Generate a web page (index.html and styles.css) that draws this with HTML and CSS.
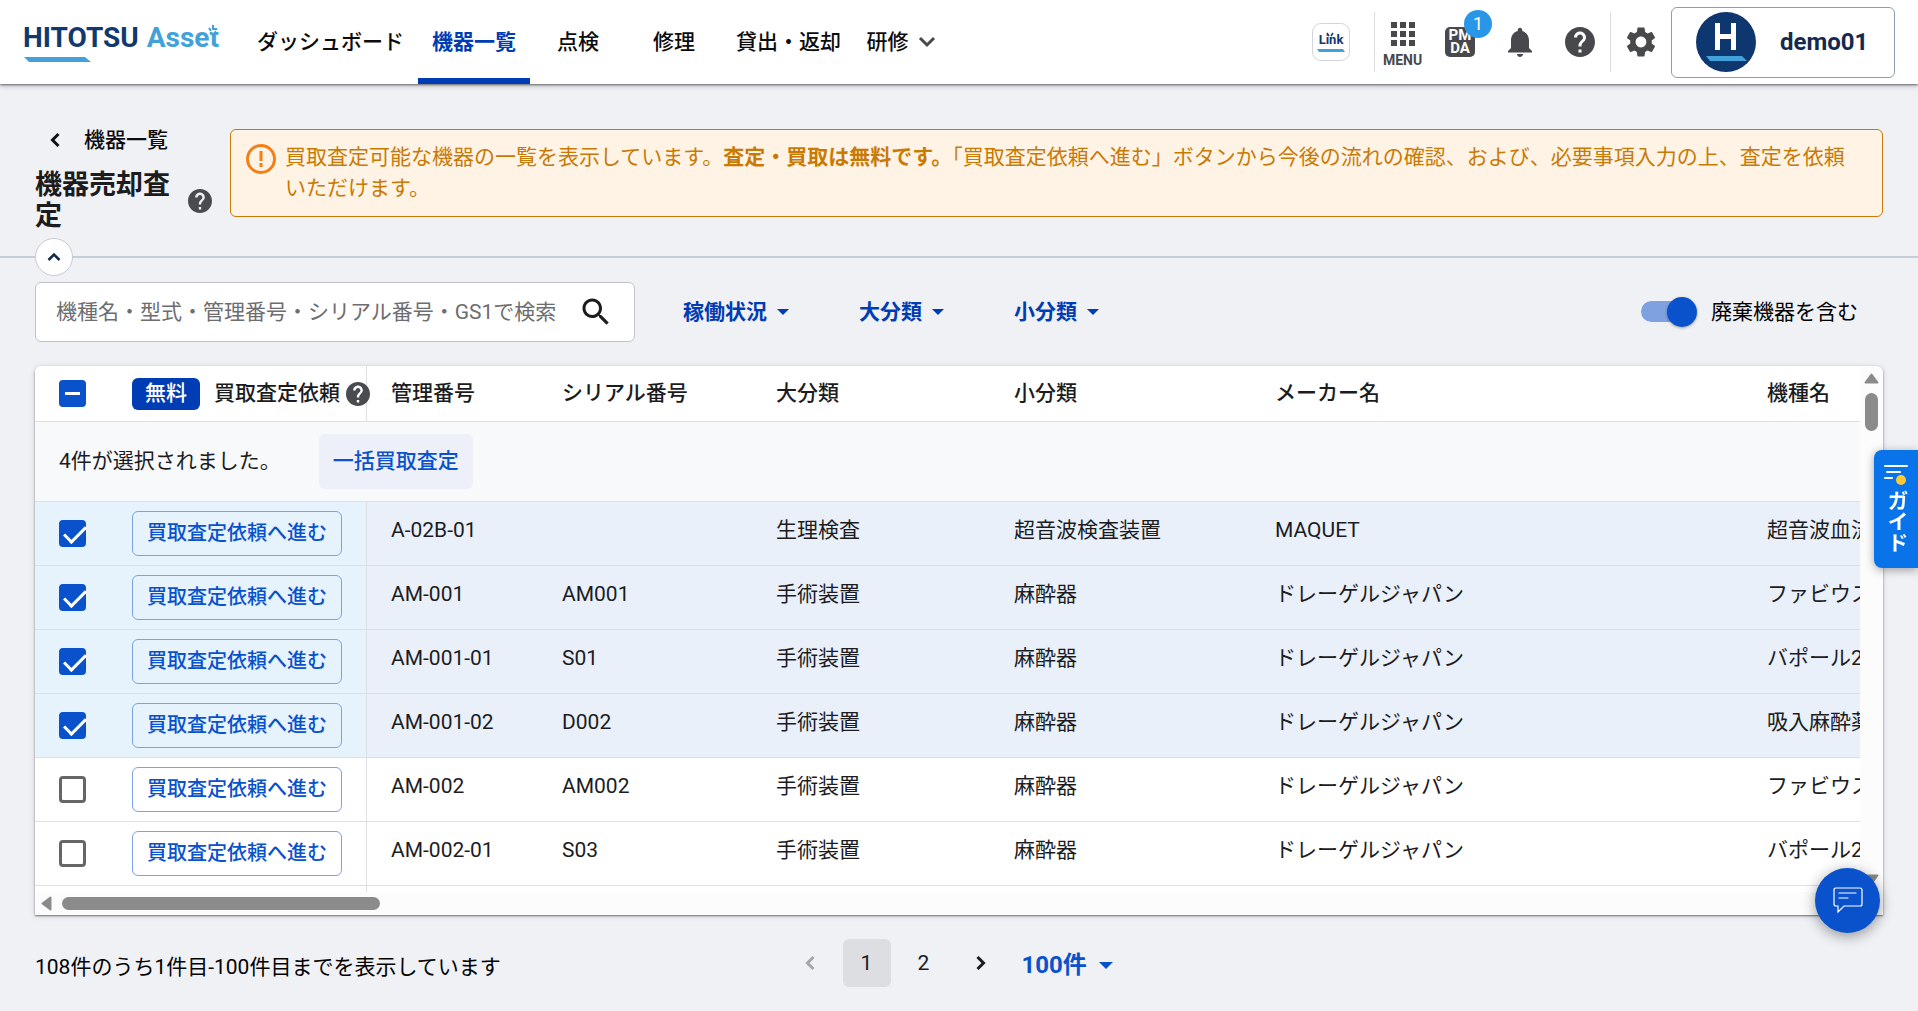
FILE: index.html
```html
<!DOCTYPE html>
<html lang="ja">
<head>
<meta charset="utf-8">
<meta name="viewport" content="width=device-width, initial-scale=1">
<title>機器売却査定 | HITOTSU Asset</title>
<link rel="stylesheet" href="styles.css">
</head>
<body>
<svg class="defs" aria-hidden="true">
  <symbol id="help" viewBox="2 2 20 20"><path d="M12 2C6.48 2 2 6.48 2 12s4.480 10 10 10 10-4.480 10-10S17.520 2 12 2zm1 17h-2v-2h2v2zm2.070-7.750-.9.920C13.450 12.900 13 13.500 13 15h-2v-.5c0-1.100.450-2.100 1.170-2.830l1.240-1.260c.370-.360.590-.860.590-1.410 0-1.100-.9-2-2-2s-2 .9-2 2H8c0-2.210 1.790-4 4-4s4 1.790 4 4c0 .880-.360 1.680-.930 2.250z"/></symbol>
  <symbol id="caret" viewBox="0 0 12 6"><path d="M0 0h12L6 6z"/></symbol>
</svg>
<div class="app">
  <header class="topbar">
    <a class="logo" href="#" aria-label="HITOTSU Asset">
      <span class="logo-main">HITOTSU</span>
      <span class="logo-sub">Asset<svg class="logo-spark" viewBox="0 0 12 12" aria-hidden="true"><path d="M0 0h12v6l-3-1-3 3-2-2-4 0z" fill="#fff"/><path d="M2 3l2 3M6 0v5M10 4H7" stroke="#42a1da" stroke-width="2" fill="none"/></svg></span>
      <svg class="logo-bar" viewBox="0 0 67 5" aria-hidden="true"><path d="M0 0h61l6 5H5z" fill="#42a1da"/></svg>
    </a>
    <nav class="nav">
      <a href="#">ダッシュボード</a>
      <a href="#" class="active" aria-current="page">機器一覧</a>
      <a href="#">点検</a>
      <a href="#">修理</a>
      <a href="#">貸出・返却</a>
      <a href="#" class="nav-more">研修<svg width="18" height="12" viewBox="0 0 18 12" aria-hidden="true"><path d="M2 2l7 7 7-7" fill="none" stroke="#48494c" stroke-width="3"/></svg></a>
    </nav>
    <div class="tools">
      <a class="link-app" href="#"><span>Link</span><svg width="28" height="3" viewBox="0 0 28 3" aria-hidden="true"><path d="M0 0h26l2 3H2z" fill="#42a1da"/></svg>
        <svg class="link-spark" width="8" height="5" viewBox="0 0 8 5" aria-hidden="true"><path d="M1 1l2 3M5 4l2-3" stroke="#11396f" stroke-width="1.500"/></svg></a>
      <span class="rule"></span>
      <button class="menu-btn" type="button"><svg width="24" height="24" viewBox="4 4 16 16" aria-hidden="true"><path d="M4 8h4V4H4v4zm6 12h4v-4h-4v4zm-6 0h4v-4H4v4zm0-6h4v-4H4v4zm6 0h4v-4h-4v4zm6-10v4h4V4h-4zm-6 4h4V4h-4v4zm6 6h4v-4h-4v4zm0 6h4v-4h-4v4z"/></svg>MENU</button>
      <button class="icon-btn" type="button"><span class="pmda"><span>PM</span><span>DA</span></span><span class="count">1</span></button>
      <button class="icon-btn" type="button" aria-label="通知"><svg width="36" height="36" viewBox="0 0 24 24"><path d="M12 22c1.100 0 2-.9 2-2h-4c0 1.100.890 2 2 2zm6-6v-5c0-3.070-1.640-5.640-4.500-6.320V4c0-.830-.670-1.500-1.500-1.500s-1.500.670-1.500 1.500v.680C7.630 5.360 6 7.920 6 11v5l-2 2v1h16v-1l-2-2z"/></svg></button>
      <button class="icon-btn" type="button" aria-label="ヘルプ"><svg width="30" height="30"><use href="#help"/></svg></button>
      <span class="rule"></span>
      <button class="icon-btn" type="button" aria-label="設定"><svg width="36" height="36" viewBox="0 0 24 24"><path d="M19.140 12.940c.040-.3.060-.610.060-.940 0-.320-.020-.640-.070-.940l2.030-1.580c.180-.140.230-.410.120-.610l-1.920-3.320c-.120-.220-.370-.290-.590-.220l-2.390.960c-.5-.380-1.030-.7-1.620-.940l-.360-2.540c-.040-.240-.240-.410-.480-.410h-3.840c-.240 0-.430.170-.470.410l-.360 2.540c-.590.240-1.130.570-1.620.940l-2.390-.960c-.220-.080-.470 0-.590.220L2.740 8.870c-.120.210-.080.470.120.610l2.030 1.580c-.050.3-.090.630-.090.940s.020.640.070.940l-2.030 1.580c-.180.140-.230.410-.120.610l1.920 3.320c.120.220.370.290.590.220l2.390-.960c.5.380 1.030.7 1.620.940l.360 2.540c.050.240.240.410.480.410h3.840c.240 0 .440-.170.470-.410l.360-2.540c.590-.240 1.130-.560 1.620-.940l2.390.960c.220.080.470 0 .590-.220l1.920-3.320c.120-.220.070-.470-.120-.610l-2.010-1.580zM12 15.600c-1.980 0-3.600-1.620-3.600-3.600s1.620-3.600 3.600-3.600 3.600 1.620 3.600 3.600-1.620 3.600-3.600 3.600z"/></svg></button>
      <button class="user" type="button">
        <svg width="60" height="60" viewBox="0 0 60 60" aria-hidden="true"><circle cx="30" cy="30" r="30" fill="#0e376f"/><path d="M19 11h5v11h11V11h5v27h-5V27H24v11h-5z" fill="#fff"/><path d="M10 44h36l5 5H14z" fill="#42a1da"/></svg>
        demo01
      </button>
    </div>
  </header>

  <section class="intro">
    <div class="heading">
      <a class="back" href="#"><svg width="10" height="16" viewBox="0 0 10 16" aria-hidden="true"><path d="M8.500 2L2.500 8l6 6" fill="none" stroke="#111" stroke-width="3"/></svg>機器一覧</a>
      <div class="title-row">
        <h1>機器売却査定</h1>
        <svg class="help-icon" width="24" height="24" role="img" aria-label="ヘルプ"><use href="#help"/></svg>
      </div>
    </div>
    <div class="notice">
      <svg width="30" height="30" viewBox="0 0 30 30" aria-hidden="true"><circle cx="15" cy="15" r="13.500" fill="none" stroke="#f57f17" stroke-width="3"/><path d="M15 7v10M15 19v4" stroke="#f57f17" stroke-width="3"/></svg>
      <p>買取査定可能な機器の一覧を表示しています。<b>査定・買取は無料です。</b>「買取査定依頼へ進む」ボタンから今後の流れの確認、および、必要事項入力の上、査定を依頼いただけます。</p>
    </div>
    <button class="collapse" type="button" aria-label="閉じる"><svg width="14" height="10" viewBox="0 0 14 10"><path d="M1.500 8L7 2.500 12.500 8" fill="none" stroke="#14294f" stroke-width="2.500"/></svg></button>
  </section>

  <main class="content">
    <div class="filters">
      <div class="search">
        <input type="search" aria-label="検索" placeholder="機種名・型式・管理番号・シリアル番号・GS1で検索">
        <button type="button" aria-label="検索する"><svg width="36" height="36" viewBox="0 0 24 24"><path d="M15.500 14h-.790l-.280-.270C15.410 12.590 16 11.110 16 9.500 16 5.910 13.090 3 9.500 3S3 5.910 3 9.500 5.910 16 9.500 16c1.610 0 3.090-.590 4.230-1.570l.270.280v.790l5 4.990L20.490 19l-4.990-5zm-6 0C7.010 14 5 11.990 5 9.500S7.010 5 9.500 5 14 7.010 14 9.500 11.990 14 9.500 14z"/></svg></button>
      </div>
      <div class="filter-list">
        <button type="button">稼働状況<svg width="12" height="6"><use href="#caret"/></svg></button>
        <button type="button">大分類<svg width="12" height="6"><use href="#caret"/></svg></button>
        <button type="button">小分類<svg width="12" height="6"><use href="#caret"/></svg></button>
      </div>
      <label class="switch"><input type="checkbox" role="switch" checked>廃棄機器を含む</label>
    </div>

    <div class="card">
      <div class="viewport">
        <table class="grid">
          <colgroup><col class="c-check"><col class="c-action"><col class="c-id"><col class="c-serial"><col class="c-large"><col class="c-small"><col class="c-maker"><col class="c-model"></colgroup>
          <thead>
            <tr>
              <th class="check"><input type="checkbox" class="box partial" aria-label="すべて選択"></th>
              <th class="action"><div class="action-head"><span class="free">無料</span>買取査定依頼<svg class="help-icon" width="24" height="24" role="img" aria-label="ヘルプ"><use href="#help"/></svg></div></th>
              <th>管理番号</th><th>シリアル番号</th><th>大分類</th><th>小分類</th><th>メーカー名</th><th>機種名</th>
            </tr>
          </thead>
          <tbody>
            <tr class="bulk"><td colspan="8"><div class="bulk-row">4件が選択されました。<button type="button">一括買取査定</button></div></td></tr>
            <tr class="selected"><td class="check"><input type="checkbox" class="box" checked aria-label="A-02B-01を選択"></td><td class="action"><button type="button">買取査定依頼へ進む</button></td><td>A-02B-01</td><td></td><td>生理検査</td><td>超音波検査装置</td><td>MAQUET</td><td>超音波血流計</td></tr>
            <tr class="selected"><td class="check"><input type="checkbox" class="box" checked aria-label="AM-001を選択"></td><td class="action"><button type="button">買取査定依頼へ進む</button></td><td>AM-001</td><td>AM001</td><td>手術装置</td><td>麻酔器</td><td>ドレーゲルジャパン</td><td>ファビウス</td></tr>
            <tr class="selected"><td class="check"><input type="checkbox" class="box" checked aria-label="AM-001-01を選択"></td><td class="action"><button type="button">買取査定依頼へ進む</button></td><td>AM-001-01</td><td>S01</td><td>手術装置</td><td>麻酔器</td><td>ドレーゲルジャパン</td><td>バポール2000</td></tr>
            <tr class="selected"><td class="check"><input type="checkbox" class="box" checked aria-label="AM-001-02を選択"></td><td class="action"><button type="button">買取査定依頼へ進む</button></td><td>AM-001-02</td><td>D002</td><td>手術装置</td><td>麻酔器</td><td>ドレーゲルジャパン</td><td>吸入麻酔薬</td></tr>
            <tr><td class="check"><input type="checkbox" class="box" aria-label="AM-002を選択"></td><td class="action"><button type="button">買取査定依頼へ進む</button></td><td>AM-002</td><td>AM002</td><td>手術装置</td><td>麻酔器</td><td>ドレーゲルジャパン</td><td>ファビウス</td></tr>
            <tr><td class="check"><input type="checkbox" class="box" aria-label="AM-002-01を選択"></td><td class="action"><button type="button">買取査定依頼へ進む</button></td><td>AM-002-01</td><td>S03</td><td>手術装置</td><td>麻酔器</td><td>ドレーゲルジャパン</td><td>バポール2000</td></tr>
            <tr><td class="check"></td><td class="action"></td><td></td><td></td><td></td><td></td><td></td><td></td></tr>
          </tbody>
        </table>
      </div>
      <div class="vbar" aria-hidden="true">
        <svg width="15" height="11" viewBox="0 0 15 11"><path d="M7.500 1.500L13.500 9.500H1.500z" fill="#8b8b8b" stroke="#8b8b8b" stroke-width="2" stroke-linejoin="round"/></svg>
        <span class="thumb"></span>
        <svg width="15" height="11" viewBox="0 0 15 11"><path d="M7.500 9.500L1.500 1.500h12z" fill="#8b8b8b" stroke="#8b8b8b" stroke-width="2" stroke-linejoin="round"/></svg>
      </div>
      <div class="hbar" aria-hidden="true">
        <svg width="11" height="15" viewBox="0 0 11 15"><path d="M1.500 7.500L9.500 1.500v12z" fill="#8b8b8b" stroke="#8b8b8b" stroke-width="2" stroke-linejoin="round"/></svg>
        <span class="thumb"></span>
      </div>
    </div>

    <footer class="footer">
      <p>108件のうち1件目-100件目までを表示しています</p>
      <nav class="pager" aria-label="ページ">
        <button type="button" disabled aria-label="前へ"><svg width="10" height="16" viewBox="0 0 10 16"><path d="M8.500 2L2.500 8l6 6" fill="none" stroke="#a5a6a9" stroke-width="3"/></svg></button>
        <button type="button" class="current" aria-current="page">1</button>
        <button type="button">2</button>
        <button type="button" aria-label="次へ"><svg width="10" height="16" viewBox="0 0 10 16"><path d="M1.500 2l6 6-6 6" fill="none" stroke="#1c1c1e" stroke-width="3"/></svg></button>
        <label class="per-page"><select aria-label="表示件数"><option>100件</option></select><svg width="14" height="7"><use href="#caret"/></svg></label>
      </nav>
    </footer>
  </main>
</div>

<button class="guide" type="button">
  <svg width="24" height="22" viewBox="0 0 24 22" aria-hidden="true"><path d="M1 2h22M3 8h13M1 14h7" stroke="#fff" stroke-width="2" stroke-linecap="round"/><circle cx="17" cy="16" r="5" fill="#ffc933"/></svg>
  <span>ガイド</span>
</button>
<button class="chat" type="button" aria-label="チャット"><svg width="30" height="27" viewBox="0 0 30 27"><path d="M3 1h24q2 0 2 2v14q0 2-2 2H11l-6 6v-6H3q-2 0-2-2V3q0-2 2-2zM6 6h17M6 11h9" fill="none" stroke="#fff" stroke-width="1.200" stroke-linecap="round"/></svg></button>
</body>
</html>
```
FILE: styles.css
```css
* { box-sizing: border-box; }

body {
  margin: 0;
  background: #f0f1f5;
  color: #1c1c1e;
  font-family: Roboto, "Noto Sans CJK JP", sans-serif;
  font-size: 21px;
  line-height: 31px;
}

button, input, select { font: inherit; color: inherit; }
button { margin: 0; padding: 0; border: 0; background: none; cursor: pointer; }
a { color: inherit; text-decoration: none; }
p, h1 { margin: 0; }
svg { flex: none; fill: currentColor; }
.defs { display: none; }

.app { display: flex; flex-direction: column; height: 100vh; min-height: 720px; }

/* Top bar */
.topbar {
  display: flex;
  align-items: center;
  height: 84px;
  padding: 0 23px;
  background: #fff;
  box-shadow: 0 1px 2px rgba(0, 0, 0, .5), 0 2px 6px rgba(0, 0, 0, .2);
  flex: none;
  z-index: 1;
}
.logo {
  position: relative;
  display: flex;
  gap: 8px;
  width: 220px;
  font-size: 28px;
  line-height: 32px;
  font-weight: 700;
  padding-bottom: 8px;
}
.logo-main { color: #11396f; }
.logo-sub { position: relative; color: #42a1da; }
.logo-spark { position: absolute; right: 0; top: 3px; width: 12px; height: 12px; }
.logo-bar { position: absolute; left: 1px; bottom: 0; width: 67px; height: 5px; }

.nav { display: flex; align-self: stretch; font-weight: 500; color: #0c0c0d; }
.nav a {
  display: flex;
  align-items: center;
  justify-content: center;
  min-width: 96px;
  padding: 10px 14px 4px;
  border-bottom: 6px solid transparent;
  white-space: nowrap;
}
.nav a.active { color: #003cb4; border-color: #003cb4; font-weight: 700; }
.nav a.nav-more { padding-left: 10px; gap: 9px; }

.tools { display: flex; align-items: center; margin-left: auto; color: #48494c; }
.rule { width: 1px; height: 60px; background: #dcdde1; }
.link-app {
  position: relative;
  display: flex;
  flex-direction: column;
  align-items: center;
  justify-content: center;
  gap: 2px;
  width: 38px;
  height: 38px;
  margin-right: 24px;
  border: 1px solid #d3d5dc;
  border-radius: 9px;
  color: #11396f;
  font-size: 13px;
  line-height: 14px;
  font-weight: 700;
}
.link-spark { position: absolute; left: 13px; top: 8px; }
.menu-btn {
  display: flex;
  flex-direction: column;
  align-items: center;
  gap: 6px;
  width: 55px;
  padding-top: 6px;
  font-size: 14px;
  line-height: 16px;
  font-weight: 700;
}
.icon-btn {
  position: relative;
  display: flex;
  align-items: center;
  justify-content: center;
  width: 60px;
  height: 60px;
}
.pmda {
  display: flex;
  flex-direction: column;
  justify-content: center;
  width: 30px;
  height: 30px;
  border-radius: 5px;
  background: #48494c;
  color: #fff;
  font-size: 15px;
  line-height: 13px;
  font-weight: 700;
}
.count {
  position: absolute;
  left: 34px;
  top: -2px;
  width: 28px;
  height: 28px;
  border-radius: 50%;
  background: #2a96e8;
  color: #fff;
  font-size: 18px;
  line-height: 28px;
}
.user {
  display: flex;
  align-items: center;
  gap: 24px;
  min-width: 224px;
  height: 71px;
  padding: 0 24px;
  border: 1px solid #8f9cb0;
  border-radius: 6px;
  color: #14294f;
  font-size: 24px;
  font-weight: 700;
}

/* Page heading */
.intro {
  position: relative;
  display: grid;
  grid-template-columns: 177px 1fr;
  gap: 18px;
  flex: none;
  padding: 44px 35px 24px;
  border-bottom: 2px solid #c5cdd5;
}
.back {
  display: flex;
  align-items: center;
  gap: 24px;
  height: 24px;
  margin-bottom: 18px;
  padding-left: 15px;
  font-weight: 500;
  color: #0c0c0d;
}
.title-row { display: flex; align-items: center; justify-content: space-between; }
h1 { font-size: 27px; line-height: 31px; font-weight: 700; }
.help-icon { color: #4a4b4f; }
.notice {
  display: flex;
  align-items: flex-start;
  align-self: start;
  gap: 9px;
  min-height: 88px;
  margin-top: 1px;
  padding: 12px 24px 12px 15px;
  border: 1px solid #c87a05;
  border-radius: 6px;
  background: #fff3e5;
  color: #c87a05;
}
.notice svg { margin-top: 2px; }
.collapse {
  position: absolute;
  left: 35px;
  bottom: -20px;
  display: flex;
  align-items: center;
  justify-content: center;
  width: 38px;
  height: 38px;
  border: 1px solid #c5cad6;
  border-radius: 50%;
  background: #fff;
}

/* Filters */
.content { display: flex; flex-direction: column; flex: 1; min-height: 0; padding: 24px 35px 0; }
.filters { display: flex; align-items: center; flex: none; }
.search {
  display: flex;
  align-items: center;
  width: 600px;
  height: 60px;
  padding: 0 20px;
  border: 1px solid #c2c3c7;
  border-radius: 6px;
  background: #fff;
}
.search input { flex: 1; min-width: 0; padding: 0; border: 0; outline: 0; background: none; }
.search input::placeholder { color: #6c6d70; opacity: 1; }
.search button { height: 36px; }
.filter-list { display: flex; gap: 70px; margin-left: 48px; color: #003cb4; }
.filter-list button { display: flex; align-items: center; gap: 10px; font-weight: 700; }
.switch { display: flex; align-items: center; gap: 14px; margin: 0 25px 0 auto; color: #000; }
.switch input {
  position: relative;
  appearance: none;
  width: 56px;
  height: 30px;
  margin: 0;
}
.switch input::before {
  content: "";
  position: absolute;
  inset: 4px 4px 5px 0;
  border-radius: 11px;
  background: #7ea2e0;
}
.switch input::after {
  content: "";
  position: absolute;
  right: 0;
  width: 30px;
  height: 30px;
  border-radius: 50%;
  background: #0952cc;
  box-shadow: 0 1px 3px rgba(0, 0, 0, .35);
}

/* Table card */
.card {
  display: grid;
  grid-template: 1fr 23px / 1fr 23px;
  flex: 1;
  min-height: 0;
  margin-top: 24px;
  border-radius: 6px 6px 0 0;
  background: #fcfcfc;
  box-shadow: 0 1px 2px rgba(0, 0, 0, .5), 0 1px 6px rgba(0, 0, 0, .12);
}
.viewport { overflow: hidden; background: #fff; border-radius: 6px 0 0 0; }
.grid { width: 2108px; table-layout: fixed; border-spacing: 0; white-space: nowrap; }
.c-check { width: 97px; }
.c-action { width: 235px; }
.c-id { width: 171px; }
.c-serial { width: 214px; }
.c-large { width: 238px; }
.c-small { width: 261px; }
.c-maker { width: 492px; }
.grid th, .grid td {
  height: 64px;
  padding: 0 0 7px 24px;
  border-bottom: 1px solid #dedfe1;
  text-align: left;
  font-weight: 400;
}
.grid th { height: 56px; padding-bottom: 0; font-weight: 500; }
.grid .check { padding-bottom: 0; line-height: 0; }
.grid .action { padding: 0; border-right: 1px solid #dedfe1; }
.selected td { background: #e9f0fa; }
.selected .check, .selected .action { background: #e6f3fd; }
.action-head { display: flex; align-items: center; }
.action-head .help-icon { margin-left: 6px; }
.free {
  margin-right: 14px;
  padding: 0 13px 1px 13px;
  border-radius: 6px;
  background: #003cb4;
  color: #fff;
}
.action button {
  display: block;
  width: 210px;
  height: 45px;
  border: 1px solid #7ea2e0;
  border-radius: 6px;
  color: #0952cc;
  font-size: 20px;
  font-weight: 500;
}
.grid .bulk td { height: 80px; padding-bottom: 0; background: #f8f9fb; }
.bulk-row { display: flex; align-items: center; gap: 38px; }
.bulk button {
  height: 55px;
  padding: 0 14px;
  border-radius: 6px;
  background: #edf0f8;
  color: #0952cc;
  font-weight: 500;
}
.box {
  position: relative;
  appearance: none;
  width: 27px;
  height: 27px;
  margin: 0;
  border: 3px solid #666;
  border-radius: 4px;
  vertical-align: middle;
}
.box:checked, .box.partial { border-color: #0952cc; background: #0952cc; }
.box:checked::before {
  content: "";
  position: absolute;
  left: 7px;
  top: -2px;
  width: 9px;
  height: 19px;
  border: solid #fff;
  border-width: 0 3px 3px 0;
  transform: rotate(45deg);
}
.box.partial::before {
  content: "";
  position: absolute;
  left: 3px;
  top: 9px;
  width: 15px;
  height: 3px;
  background: #fff;
}

.thumb { border-radius: 7px; background: #8b8b8b; }
.vbar { display: flex; flex-direction: column; align-items: center; padding: 7px 0; }
.vbar .thumb { width: 13px; height: 38px; margin: 9px 0 auto; }
.hbar { display: flex; align-items: center; padding-left: 6px; }
.hbar .thumb { width: 17.5%; height: 13px; margin-left: 10px; }

/* Footer */
.footer {
  display: grid;
  grid-template-columns: 1fr auto 1fr;
  align-items: center;
  flex: none;
  padding: 24px 0;
  color: #000;
}
.footer p { padding-top: 8px; }
.pager { display: flex; align-items: center; gap: 9px; padding-right: 20px; color: #1c1c1e; }
.pager button {
  display: flex;
  align-items: center;
  justify-content: center;
  width: 48px;
  height: 48px;
  border-radius: 6px;
}
.pager .current { background: #dddee2; }
.per-page {
  display: flex;
  align-items: center;
  gap: 11px;
  margin-left: 8px;
  padding-top: 4px;
  color: #0952cc;
}
.per-page select {
  appearance: none;
  padding: 0;
  border: 0;
  background: none;
  font-size: 24px;
  font-weight: 700;
}

/* Floating controls */
.guide {
  position: fixed;
  right: 0;
  top: 450px;
  z-index: 2;
  display: flex;
  flex-direction: column;
  align-items: center;
  gap: 4px;
  width: 44px;
  height: 118px;
  padding-top: 14px;
  border-radius: 8px 0 0 8px;
  background: #0973ea;
  box-shadow: 0 2px 10px rgba(0, 0, 0, .35);
  color: #fff;
  font-weight: 700;
  line-height: 24px;
}
.guide span { writing-mode: vertical-rl; }
.chat {
  position: fixed;
  right: 38px;
  bottom: 78px;
  z-index: 2;
  display: flex;
  align-items: center;
  justify-content: center;
  width: 65px;
  height: 65px;
  border-radius: 50%;
  background: #0952cc;
  box-shadow: 0 3px 14px rgba(0, 0, 0, .4);
}
```
